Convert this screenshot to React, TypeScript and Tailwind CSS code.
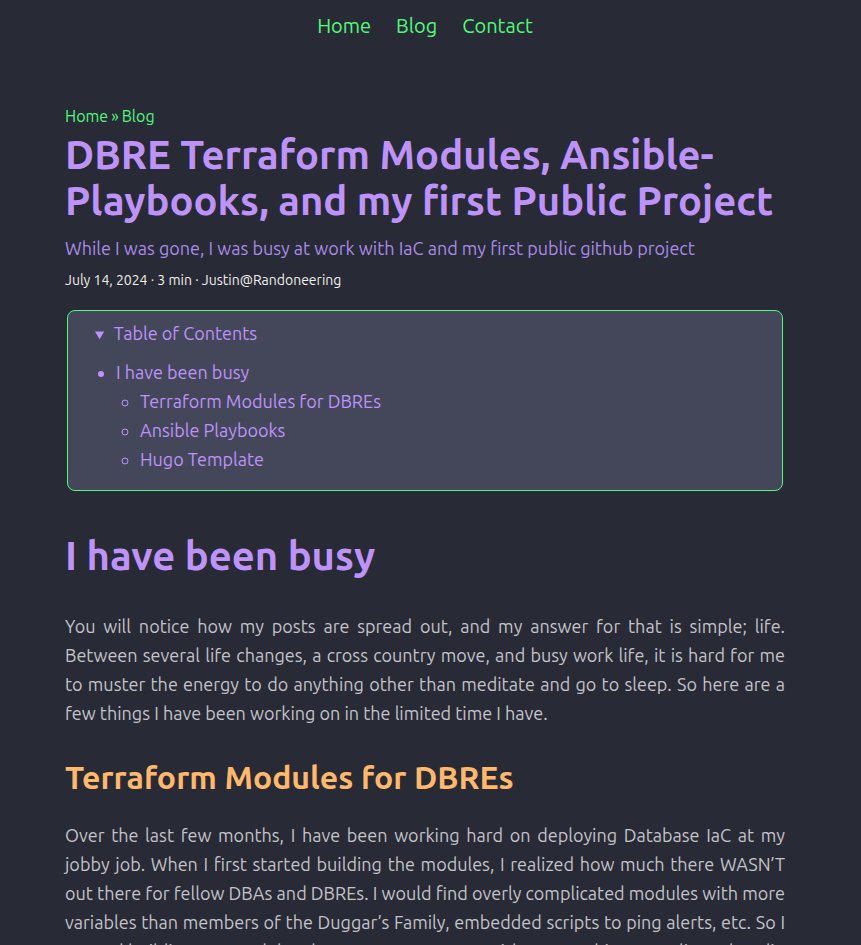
import React from "react"

const toc = [
    {title: 'I have been busy', children: ['Terraform Modules for DBREs', 'Ansible Playbooks', 'Hugo Template']},
]

export default function App() {
    return <div className="min-h-[945px] bg-[#282a36] pr-[11px]" style={{fontFamily: 'Ubuntu, Lato, "Noto Sans", sans-serif'}}>
        <nav className="flex justify-center gap-[25px] pt-[13px] text-[20px] leading-[26px] text-[#50fa7b]">
            <a href="#">Home</a>
            <a href="#">Blog</a>
            <a href="#">Contact</a>
        </nav>

        <main className="mx-auto w-[720px] pt-[67px]">
            <div className="text-[16px] leading-[20px] text-[#50fa7b]">
                <a href="#">Home</a>
                <span className="mx-[3px]">»</span>
                <a href="#">Blog</a>
            </div>

            <h1 className="mt-[6px] text-[40px] font-bold leading-[46px] text-[#bd93f9]">
                DBRE Terraform Modules, Ansible-Playbooks, and my first Public Project
            </h1>
            <p className="mt-[12px] text-[18px] leading-[24px] text-[#a98be8]">
                While I was gone, I was busy at work with IaC and my first public github project
            </p>
            <p className="mt-[11px] text-[14px] leading-[18px] text-[#f0f0ea]">
                July 14, 2024 · 3 min · Justin@Randoneering
            </p>

            <details open className="mx-[2px] mt-[21px] rounded-[8px] border border-[#50fa7b] bg-[#44475a] px-[27px] pt-[10px] pb-[16px]">
                <summary className="cursor-pointer text-[18px] leading-[24px] text-[#bd93f9] marker:text-[14px]">
                    <span className="ml-[4px]">Table of Contents</span>
                </summary>
                <ul className="mt-[11px] list-disc pl-[21px] text-[18px] leading-[29px] text-[#bd93f9]">
                    {toc.map(item => <li key={item.title}>
                        <a href="#">{item.title}</a>
                        <ul className="list-[circle] pl-[24px]">
                            {item.children.map(child => <li key={child}><a href="#">{child}</a></li>)}
                        </ul>
                    </li>)}
                </ul>
            </details>

            <h2 className="mt-[40px] text-[40px] font-bold leading-[50px] text-[#bd93f9]">I have been busy</h2>
            <p className="mt-[31px] text-justify text-[18px] leading-[29px] text-[#c3c3c8]">
                You will notice how my posts are spread out, and my answer for that is simple; life. Between several life changes, a cross country move, and busy work life, it is hard for me to muster the energy to do anything other than meditate and go to sleep. So here are a few things I have been working on in the limited time I have.
            </p>

            <h3 className="mt-[29px] text-[32px] font-bold leading-[40px] text-[#ffb86c]">Terraform Modules for DBREs</h3>
            <p className="mt-[24px] text-justify text-[18px] leading-[29px] text-[#c3c3c8]">
                Over the last few months, I have been working hard on deploying Database IaC at my jobby job. When I first started building the modules, I realized how much there WASN’T out there for fellow DBAs and DBREs. I would find overly complicated modules with more variables than members of the Duggar’s Family, embedded scripts to ping alerts, etc. So I started building out modules that were easy to use, with out anything complicated to dig through, and something that any team could pick up and run with.
            </p>
        </main>
    </div>
}
